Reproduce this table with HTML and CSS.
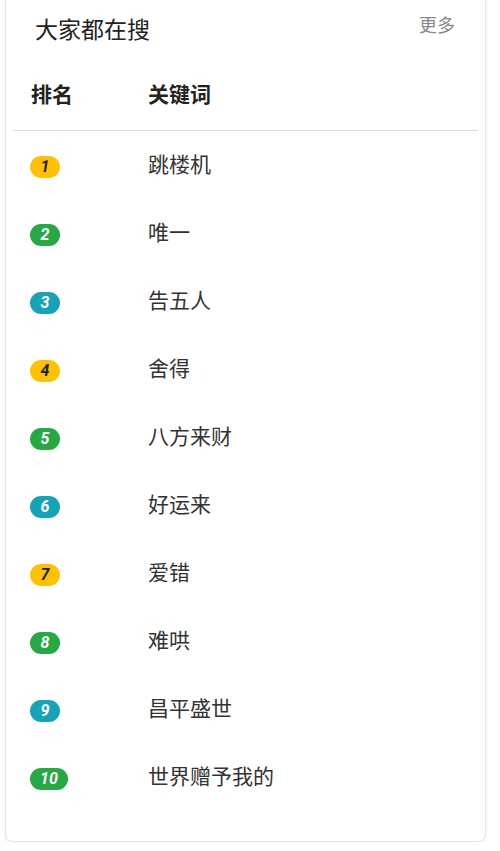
FILE: index.html
```html
<!DOCTYPE html>
<html lang="zh">
<head>
<meta charset="utf-8">
<link rel="stylesheet" href="styles.css">
</head>
<body>
<div class="card">
  <div class="card-head">
    <span class="title">大家都在搜</span>
    <span class="more">更多</span>
  </div>
  <div class="table">
    <div class="thead">
      <span class="c1">排名</span>
      <span class="c2">关键词</span>
    </div>
    <div class="row"><span class="c1"><i class="badge y">1</i></span><span class="c2">跳楼机</span></div>
    <div class="row"><span class="c1"><i class="badge g">2</i></span><span class="c2">唯一</span></div>
    <div class="row"><span class="c1"><i class="badge t">3</i></span><span class="c2">告五人</span></div>
    <div class="row"><span class="c1"><i class="badge y">4</i></span><span class="c2">舍得</span></div>
    <div class="row"><span class="c1"><i class="badge g">5</i></span><span class="c2">八方来财</span></div>
    <div class="row"><span class="c1"><i class="badge t">6</i></span><span class="c2">好运来</span></div>
    <div class="row"><span class="c1"><i class="badge y">7</i></span><span class="c2">爱错</span></div>
    <div class="row"><span class="c1"><i class="badge g">8</i></span><span class="c2">难哄</span></div>
    <div class="row"><span class="c1"><i class="badge t">9</i></span><span class="c2">昌平盛世</span></div>
    <div class="row"><span class="c1"><i class="badge g">10</i></span><span class="c2">世界赠予我的</span></div>
  </div>
</div>
</body>
</html>
```
FILE: styles.css
```css
html, body {
  margin: 0;
  padding: 0;
  background: #ffffff;
}
body {
  font-family: Roboto, "Noto Sans CJK SC", sans-serif;
  color: #333;
  overflow: hidden;
}
.card {
  margin: -12px 0 0 5px;
  width: 481px;
  box-sizing: border-box;
  border: 1px solid #e4e4e4;
  border-radius: 8px;
  box-shadow: 0 1px 4px rgba(0,0,0,0.08);
  background: #fff;
  padding: 0 7px 30px 7px;
}
.card-head {
  height: 72px;
  display: flex;
  align-items: center;
  justify-content: space-between;
  padding: 0 23px 0 22px;
}
.title {
  font-family: "Noto Sans CJK SC", sans-serif;
  font-size: 23px;
  color: #222;
  line-height: 1;
  margin-top: 6px;
}
.more {
  font-family: "Noto Sans CJK SC", sans-serif;
  font-size: 18px;
  color: #888;
  line-height: 1;
  margin-top: -2px;
}
.thead, .row {
  display: flex;
  align-items: center;
}
.thead {
  height: 69px;
  border-bottom: 1px solid #dcdcdc;
  font-family: "Noto Sans CJK SC", sans-serif;
  font-weight: 700;
  font-size: 21px;
  color: #222;
}
.thead span {
  margin-top: -6px;
}
.row {
  height: 68px;
  font-family: "Noto Sans CJK SC", sans-serif;
  font-size: 21px;
  color: #333;
}
.c1 {
  width: 117px;
  box-sizing: border-box;
  padding-left: 17px;
  flex: none;
  display: flex;
  align-items: center;
}
.thead .c1 {
  padding-left: 18px;
}
.thead .c2 {
  margin-left: 18px;
}
.row .c2 {
  margin-left: 18px;
  margin-top: -5px;
}
.badge {
  display: inline-block;
  min-width: 30px;
  height: 22px;
  box-sizing: border-box;
  padding: 0 10px;
  border-radius: 11px;
  font-family: Roboto, sans-serif;
  font-style: italic;
  font-weight: 700;
  font-size: 16px;
  line-height: 22px;
  text-align: center;
  margin-top: 3px;
}
.y { background: #ffc107; color: #212529; }
.g { background: #28a745; color: #fff; }
.t { background: #17a2b8; color: #fff; }
```
